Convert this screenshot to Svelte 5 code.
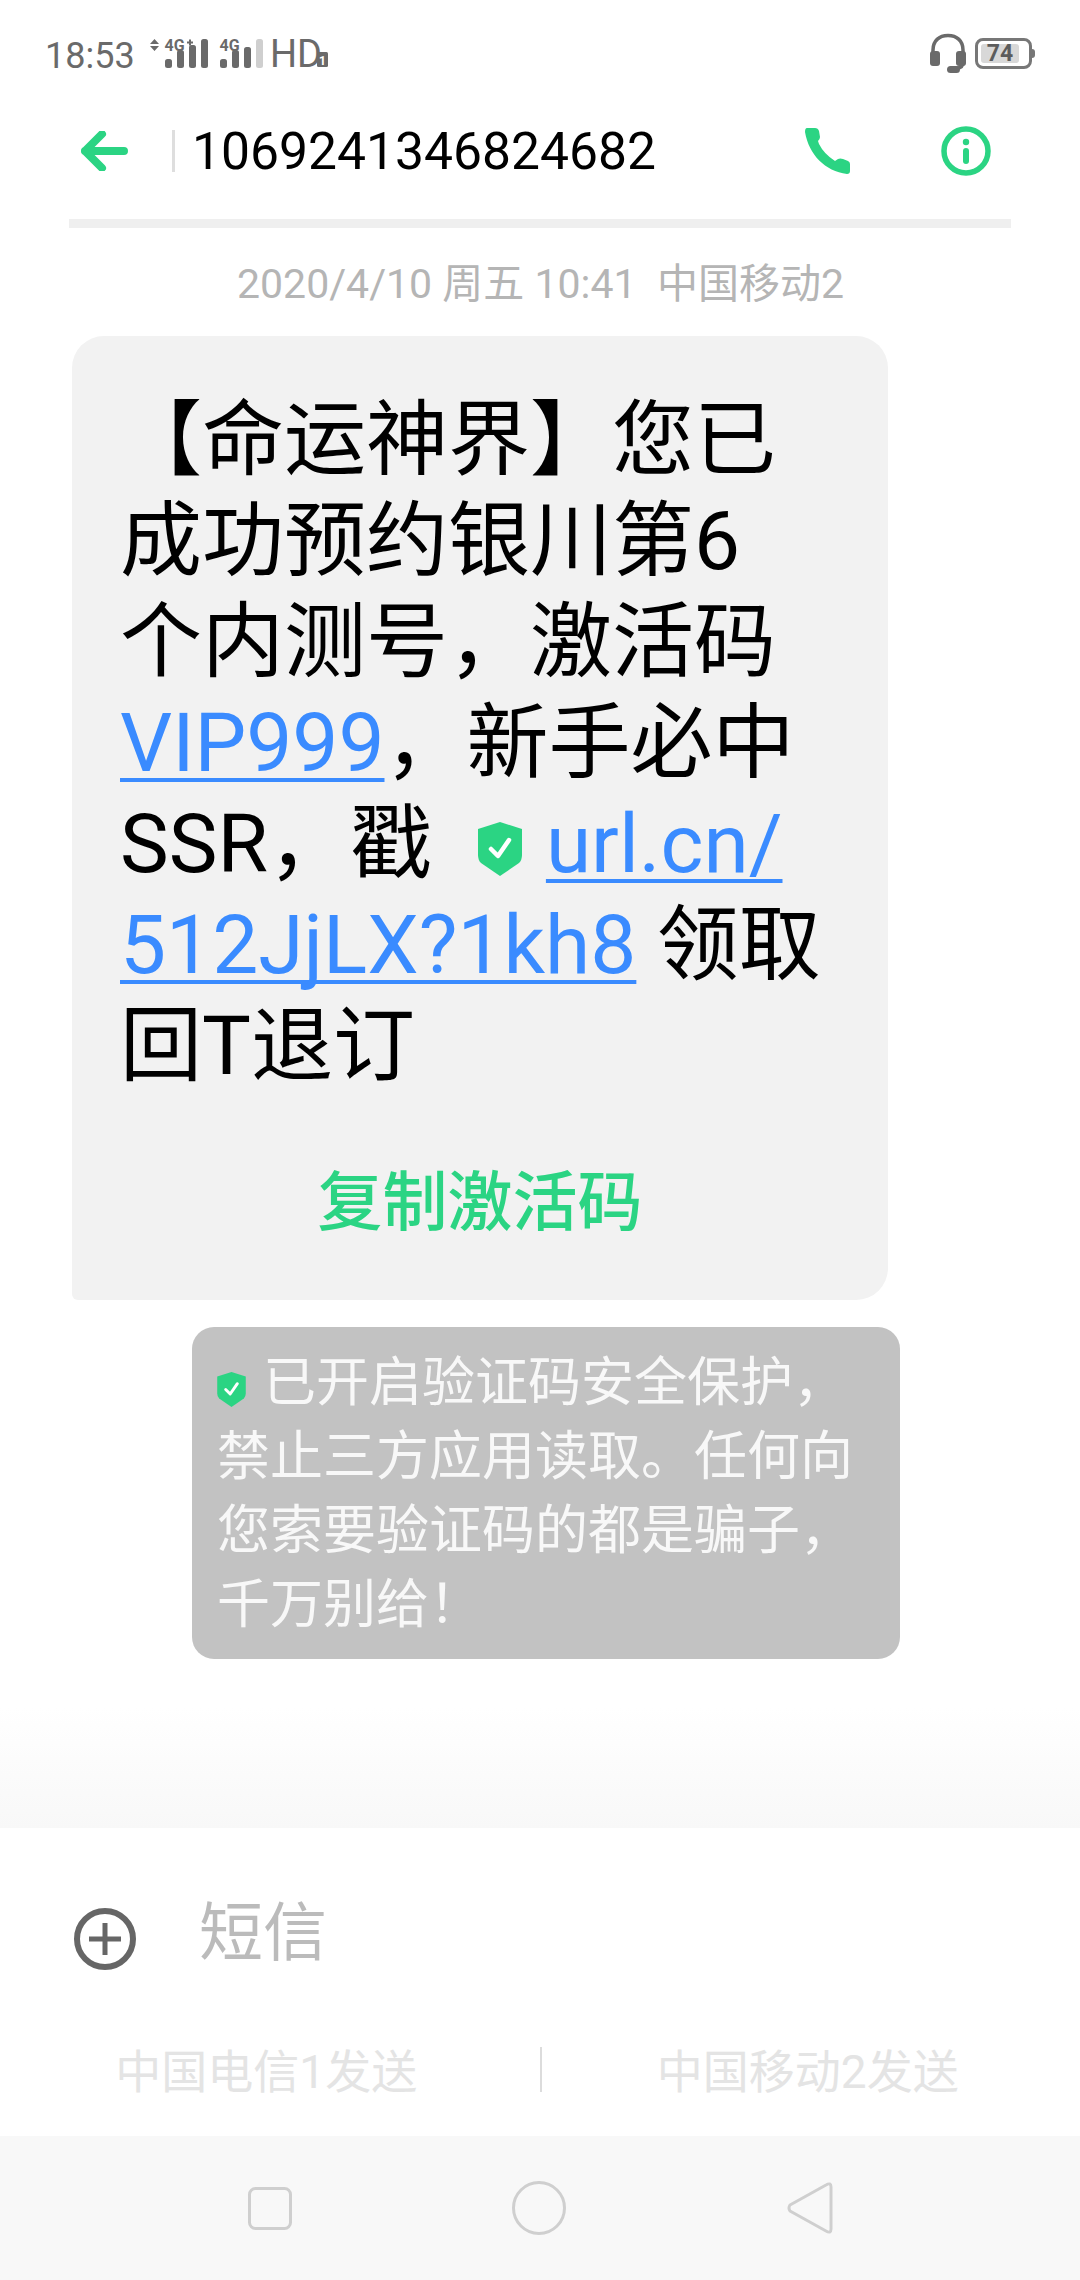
<script>
  const bars1 = [[164, 59], [176, 50], [188, 45], [200, 39]];
  const bars2 = [[219, 59], [231, 50], [243, 47]];
</script>

<div class="screen">
  <div class="status">
    <span class="time">18:53</span>
    <svg class="signal" viewBox="140 30 190 45" width="190" height="45">
      <path d="M153.500 39l4.500 5h-9zM153.500 51l4.500-5h-9z" fill="#6a6a6a" />
      <text x="163.500" y="51" class="net">4G</text>
      <path d="M186 42.500h6M189 39.500v6" stroke="#6a6a6a" stroke-width="2" />
      {#each bars1 as [x, y]}
        <rect {x} {y} width="7" height={68 - y} rx="2.500" fill="#6a6a6a" />
      {/each}
      <text x="218.500" y="51" class="net">4G</text>
      {#each bars2 as [x, y]}
        <rect {x} {y} width="7" height={68 - y} rx="2.500" fill="#6a6a6a" />
      {/each}
      <rect x="255" y="39" width="7" height="29" rx="2.500" fill="#cfcfcf" />
      <text x="269" y="67" class="hd">HD</text>
      <rect x="316" y="52" width="11" height="15" rx="1.500" fill="#6a6a6a" />
      <text x="321.500" y="65" class="one">1</text>
    </svg>
    <span class="spacer"></span>
    <svg class="headset" viewBox="0 0 36 41" width="36" height="41">
      <path d="M3 20V17C3 8 9 2.500 18 2.500S33 8 33 17V29C33 33 31 35 27 35" fill="none" stroke="#6a6a6a" stroke-width="3.500" />
      <rect x="0" y="18" width="10" height="15" rx="3" fill="#6a6a6a" />
      <rect x="26" y="18" width="10" height="15" rx="3" fill="#6a6a6a" />
      <rect x="17" y="33" width="13" height="7" rx="3.500" fill="#6a6a6a" />
    </svg>
    <div class="battery">
      <span class="level">74</span>
      <span class="nub"></span>
    </div>
  </div>

  <header>
    <svg class="back" viewBox="0 0 47 40" width="47" height="40">
      <path d="M43 20H4M21 3L4 20L21 37" fill="none" stroke="#2bd483" stroke-width="8" stroke-linecap="round" stroke-linejoin="round" />
    </svg>
    <span class="sep"></span>
    <span class="number">1069241346824682</span>
    <span class="spacer"></span>
    <svg class="call" viewBox="0 0 45 46" width="45" height="46">
      <path d="M2 0H10Q13 0 14 3L15 9Q15 11 13 13L14 16Q19 26 30 33L33 31Q35 30 38 31L43 33Q45 34 45 36V43Q45 46 42 46C20 43 4 27 0 4Q0 0 2 0Z" fill="#2bd483" />
    </svg>
    <svg class="info" viewBox="0 0 50 50" width="50" height="50">
      <circle cx="25" cy="25" r="22" fill="none" stroke="#2bd483" stroke-width="5.500" />
      <circle cx="25" cy="16" r="3.200" fill="#2bd483" />
      <rect x="22" y="22" width="6" height="16" rx="3" fill="#2bd483" />
    </svg>
  </header>
  <div class="rule"></div>

  <main>
    <p class="date">2020/4/10 周五 10:41&nbsp;&nbsp;中国移动2</p>
    <div class="bubble">
      <p class="msg">【命运神界】您已<br />成功预约银川第6<br />个内测号，激活码<br /><a href="#a">VIP999</a>，新手必中<br />SSR，戳<svg class="shield big" viewBox="0 0 44 54"><path d="M22 0L44 7V33Q44 38 41 41L22 54L3 41Q0 38 0 33V7Z" fill="#2bd483" /><path d="M13 27l7 7L31 18" fill="none" stroke="#fff" stroke-width="4.500" stroke-linecap="round" stroke-linejoin="round" /></svg><a href="#a">url.cn/</a><br /><a href="#a">512JjLX?1kh8</a> 领取<br />回T退订</p>
      <div class="action">复制激活码</div>
    </div>
    <div class="notice">
      <svg class="shield small" viewBox="0 0 44 54"><path d="M22 0L44 7V33Q44 38 41 41L22 54L3 41Q0 38 0 33V7Z" fill="#2bd483" /><path d="M13 27l7 7L31 18" fill="none" stroke="#fff" stroke-width="4.500" stroke-linecap="round" stroke-linejoin="round" /></svg>已开启验证码安全保护，<br />禁止三方应用读取。任何向<br />您索要验证码的都是骗子，<br />千万别给！
    </div>
  </main>

  <section class="composer">
    <div class="input">
      <svg class="plus" viewBox="0 0 64 64" width="64" height="64">
        <circle cx="32" cy="32" r="28" fill="none" stroke="#666" stroke-width="6" />
        <path d="M16 32H48M32 16V48" stroke="#666" stroke-width="5" />
      </svg>
      <span class="placeholder">短信</span>
    </div>
    <div class="send">
      <span>中国电信1发送</span>
      <i></i>
      <span>中国移动2发送</span>
    </div>
  </section>

  <nav>
    <svg viewBox="0 0 44 43" width="44" height="43"><rect x="1.500" y="1.500" width="41" height="40" rx="6" fill="none" stroke="#cfcfcf" stroke-width="3" /></svg>
    <svg viewBox="0 0 54 54" width="54" height="54"><circle cx="27" cy="27" r="25.500" fill="none" stroke="#cfcfcf" stroke-width="3" /></svg>
    <svg viewBox="0 0 46 52" width="46" height="52"><path d="M39 3Q44 0 44 5V47Q44 52 39 49L3 29Q1 26 3 23Z" fill="none" stroke="#cfcfcf" stroke-width="3" stroke-linejoin="round" /></svg>
  </nav>
</div>

<style>
  :global(body) { margin: 0; background: #fff; }
  .screen {
    width: 1080px;
    height: 2280px;
    display: flex;
    flex-direction: column;
    overflow: hidden;
    font-family: Roboto, "Noto Sans CJK SC", sans-serif;
    background: #fff;
  }
  p { margin: 0; }
  .spacer { flex: 1; }

  .status {
    height: 100px;
    display: flex;
    align-items: flex-start;
    padding: 0 48px 0 45px;
    box-sizing: border-box;
    color: #6a6a6a;
  }
  .time { font-size: 36px; line-height: 42px; margin-top: 35px; }
  .signal { margin: 30px 0 0 6px; }
  .net { font: 700 16px Roboto, sans-serif; fill: #6a6a6a; }
  .hd { font: 400 38px Roboto, sans-serif; fill: #6a6a6a; }
  .one { font: 700 12px Roboto, sans-serif; fill: #fff; text-anchor: middle; }
  .headset { margin: 33px 9px 0 0; }
  .battery {
    position: relative;
    width: 57px;
    height: 31px;
    margin-top: 38px;
    box-sizing: border-box;
    border: 3px solid #777;
    border-radius: 8px;
    padding: 3px;
    display: flex;
  }
  .level {
    width: 38px;
    background: #d8d8d8;
    border-radius: 3px;
    color: #5c5c5c;
    font-size: 23px;
    font-weight: 700;
    line-height: 20px;
    text-align: center;
  }
  .nub { position: absolute; right: -6px; top: 8px; width: 3px; height: 9px; background: #777; border-radius: 0 3px 3px 0; }

  header {
    height: 102px;
    display: flex;
    align-items: center;
    padding: 0 89px 0 81px;
    box-sizing: border-box;
  }
  .sep { width: 3px; height: 42px; background: #dedede; margin-left: 44px; }
  .number { font-size: 51.600px; color: #000; margin-left: 17px; }
  .call { margin-right: 91px; }
  .rule { height: 9px; margin: 17px 69px 0; background: #efefef; }

  main {
    flex: 1;
    min-height: 0;
    background: linear-gradient(#fff 1480px, #f8f8f8 100%);
    display: flex;
    flex-direction: column;
  }
  .date { height: 108px; line-height: 112px; text-align: center; font-size: 41px; color: #b5b5b5; padding-left: 1px; }
  .bubble {
    width: 816px;
    height: 964px;
    margin-left: 72px;
    box-sizing: border-box;
    padding: 54px 0 0 48px;
    background: #f2f2f2;
    border-radius: 32px 32px 32px 6px;
  }
  .msg { font-size: 82px; line-height: 101px; color: #000; white-space: nowrap; }
  .msg a {
    color: #3a8bff;
    text-decoration: underline;
    text-decoration-thickness: 4px;
    text-underline-offset: 7px;
    text-decoration-skip-ink: none;
  }
  .shield { display: inline-block; }
  .big { width: 44px; height: 54px; margin: 0 24px 0 46px; vertical-align: -4px; }
  .small { width: 29px; height: 35px; margin: 0 17px 0 0; vertical-align: -6px; }
  .action { margin: 61px 0 0 -48px; text-align: center; font-size: 65px; font-weight: 500; line-height: 90px; color: #2bd483; }
  .notice {
    width: 708px;
    height: 332px;
    margin: 27px 0 0 192px;
    box-sizing: border-box;
    padding: 19px 0 0 25px;
    background: #c2c2c2;
    border-radius: 22px;
    color: #f8f8f8;
    font-size: 53px;
    line-height: 74px;
    white-space: nowrap;
  }

  .composer { height: 308px; background: #fff; display: flex; flex-direction: column; }
  .input { height: 198px; display: flex; align-items: center; padding-left: 73px; }
  .plus { margin-top: 24px; }
  .placeholder { font-size: 64px; color: #bbb; margin: 0 0 0 62px; }
  .send { height: 86px; display: flex; align-items: center; font-size: 46px; color: #e4e4e4; }
  .send span { flex: 1; text-align: center; padding-bottom: 2px; }
  .send span:first-child { padding-right: 6px; }
  .send span:last-child { padding-right: 6px; }
  .send i { width: 2px; height: 45px; background: #dcdcdc; margin-left: 1px; }

  nav {
    height: 144px;
    background: #f8f8f8;
    display: grid;
    grid-template-columns: 44px 54px 46px;
    justify-content: center;
    column-gap: 220.500px;
    align-items: center;
  }
</style>
